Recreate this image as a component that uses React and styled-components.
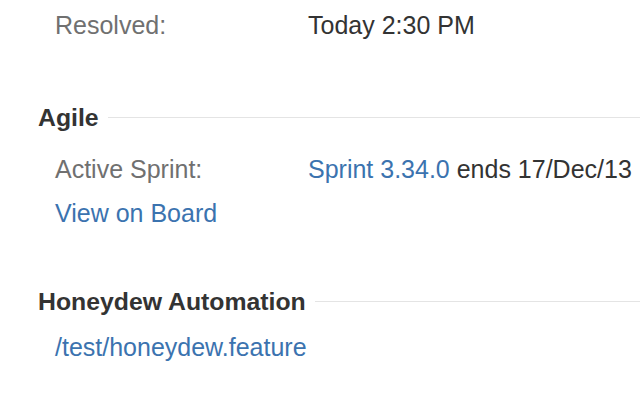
import React from "react";
import styled, { createGlobalStyle } from "styled-components";

const Global = createGlobalStyle`
  html, body { margin: 0; padding: 0; background: #fff; }
  body { font-family: "Liberation Sans", Arial, sans-serif; font-size: 25px; color: #333; }
`;

const Page = styled.div`
  padding: 8px 0 0 38px;
  overflow: hidden;
`;

const Module = styled.section`
  margin-top: ${(p) => p.$top || 0}px;
`;

const Heading = styled.h2`
  display: flex;
  align-items: center;
  gap: 9px;
  margin: 0;
  font-size: 24.8px;
  line-height: 35px;
  font-weight: bold;
  color: #333;
  &::after {
    content: "";
    flex: 1;
    height: 1px;
    background: #e4e4e4;
  }
`;

const Body = styled.div`
  padding-left: 17px;
  margin-top: ${(p) => p.$top || 0}px;
`;

const Row = styled.div`
  display: grid;
  grid-template-columns: 253px 1fr;
  line-height: 35px;
  white-space: nowrap;
  margin-bottom: ${(p) => p.$gap || 0}px;
`;

const Label = styled.span`
  color: #707070;
`;

const Value = styled.span`
  color: #333;
`;

const InlineLink = styled.a`
  color: #3b73af;
  text-decoration: none;
`;

const BlockLink = styled(InlineLink)`
  display: block;
  line-height: 35px;
`;

export default function App() {
  return (
    <>
      <Global />
      <Page>
        <Body>
          <Row>
            <Label>Resolved:</Label>
            <Value>Today 2:30 PM</Value>
          </Row>
        </Body>
        <Module $top={57}>
          <Heading>Agile</Heading>
          <Body $top={17}>
            <Row $gap={9}>
              <Label>Active Sprint:</Label>
              <Value>
                <InlineLink href="#">Sprint 3.34.0</InlineLink> ends 17/Dec/13
              </Value>
            </Row>
            <BlockLink href="#">View on Board</BlockLink>
          </Body>
        </Module>
        <Module $top={53}>
          <Heading>Honeydew Automation</Heading>
          <Body $top={11}>
            <BlockLink href="#">/test/honeydew.feature</BlockLink>
          </Body>
        </Module>
      </Page>
    </>
  );
}
